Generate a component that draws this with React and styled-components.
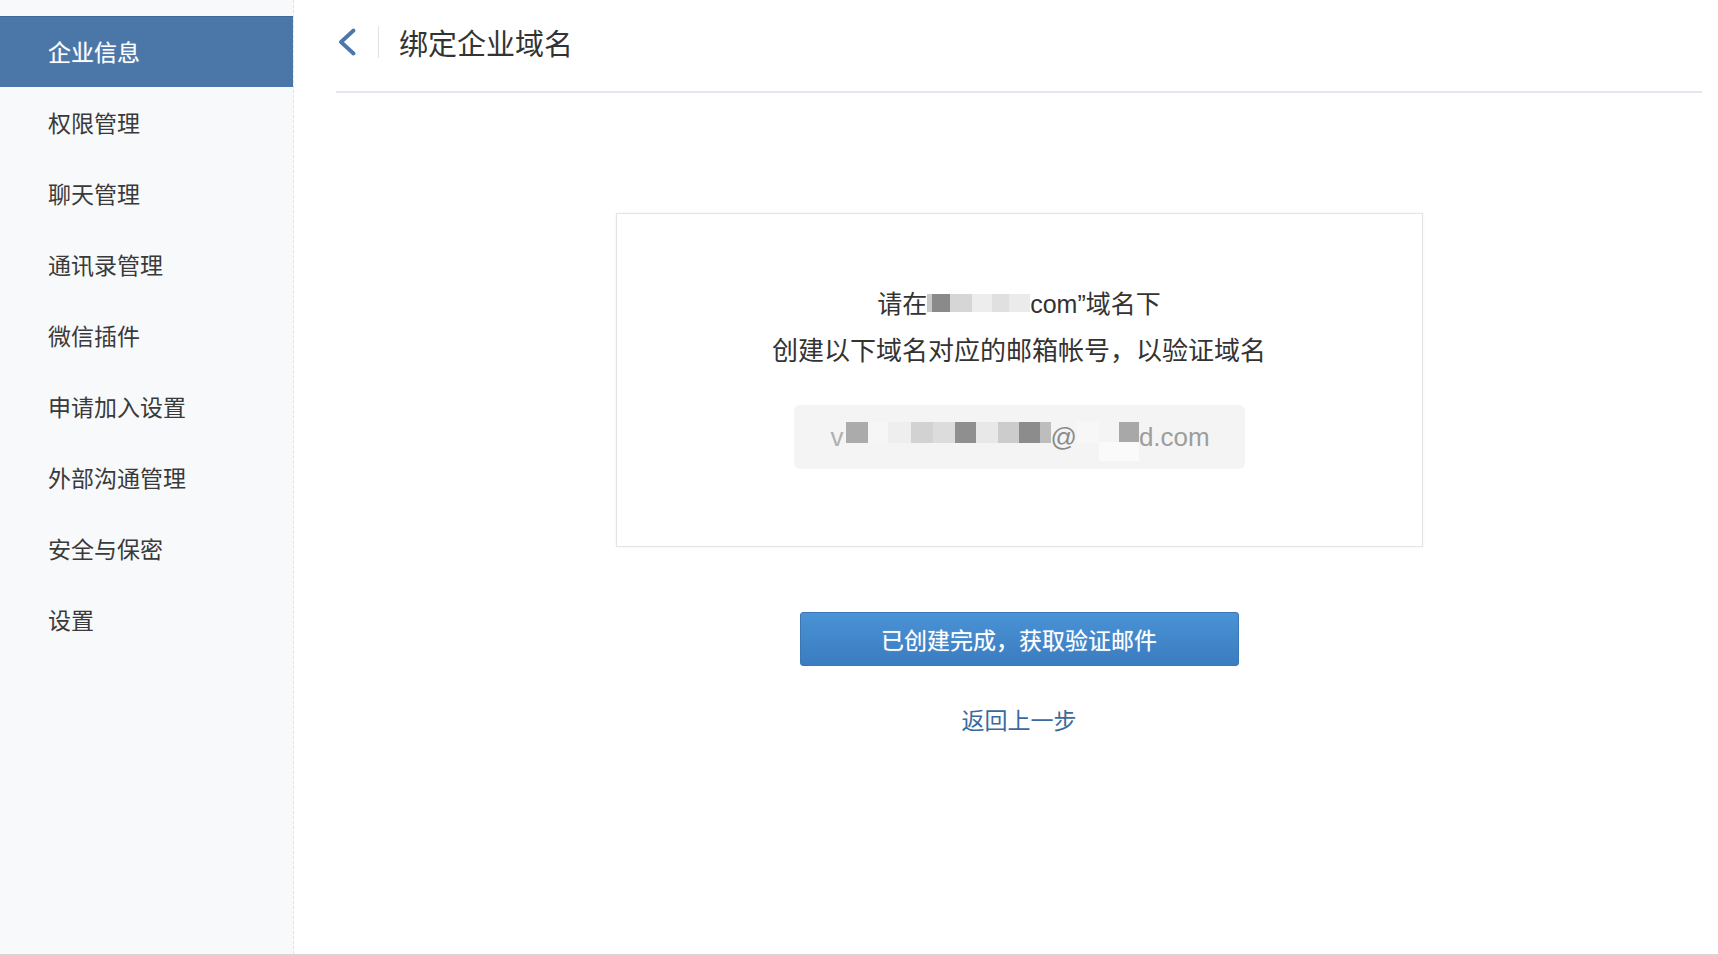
import React from "react";
import styled, { createGlobalStyle } from "styled-components";

const Global = createGlobalStyle`
  html, body { margin: 0; padding: 0; background: #fff; }
  body { font-family: "Liberation Sans", "Noto Sans CJK SC", sans-serif; color: #333; }
  * { box-sizing: border-box; }
`;

const Page = styled.div`
  display: flex;
  width: 1718px;
  height: 956px;
  border-bottom: 2px solid #d6d6d6;
  overflow: hidden;
`;

const Sidebar = styled.nav`
  width: 294px;
  flex-shrink: 0;
  background: #f7f9fb;
  border-right: 1px dashed #dfe4ea;
  padding-top: 16px;
  display: flex;
  flex-direction: column;
`;

const NavItem = styled.div`
  height: 71px;
  display: flex;
  align-items: center;
  padding-left: 48px;
  padding-bottom: 2px;
  font-size: 23px;
  font-family: "Noto Sans CJK SC", sans-serif;
  color: ${(p) => (p.$active ? "#fff" : "#3a3a3a")};
  background: ${(p) => (p.$active ? "#4a77a8" : "transparent")};
  border-top: 1px solid ${(p) => (p.$active ? "#3e6b9d" : "transparent")};
  text-shadow: ${(p) => (p.$active ? "0 0 1px rgba(255,255,255,0.5)" : "none")};
`;

const Main = styled.main`
  flex: 1;
  display: flex;
  flex-direction: column;
  padding: 0 16px 0 42px;
`;

const Header = styled.header`
  height: 93px;
  display: flex;
  align-items: center;
  border-bottom: 2px solid #e3e8ee;
  padding-left: 1px;
  padding-bottom: 7px;
`;

const BackButton = styled.button`
  border: none;
  background: none;
  padding: 0;
  display: flex;
  align-items: center;
  cursor: pointer;
`;

const Divider = styled.span`
  width: 1px;
  height: 32px;
  background: #e2e2e2;
  margin: 0 20px 0 21px;
`;

const Title = styled.h1`
  margin: 0;
  font-size: 29px;
  font-weight: normal;
  color: #333;
  font-family: "Noto Sans CJK SC", sans-serif;
`;

const Body = styled.section`
  display: flex;
  flex-direction: column;
  align-items: center;
  padding-top: 120px;
`;

const Card = styled.div`
  width: 807px;
  border: 1px solid #e4e4e4;
  box-shadow: 0 0 3px rgba(0, 0, 0, 0.05);
  display: flex;
  flex-direction: column;
  align-items: center;
  padding: 65px 0 77px;
`;

const Line = styled.div`
  display: flex;
  align-items: center;
  height: 46px;
  font-size: ${(p) => p.$size}px;
  color: #333;
`;

const Block = styled.span`
  display: inline-block;
  flex-shrink: 0;
  width: ${(p) => p.$w}px;
  height: ${(p) => p.$h || 21}px;
  background: ${(p) => p.$c};
  transform: translateY(${(p) => p.$dy || 0}px);
`;

const EmailBox = styled.div`
  margin-top: 34px;
  width: 451px;
  height: 64px;
  background: #f4f4f4;
  border-radius: 6px;
  display: flex;
  align-items: center;
  padding-left: 37px;
  font-size: 26px;
  color: #9d9d9d;
`;

const Faint = styled.span`
  color: ${(p) => p.$c || "#9d9d9d"};
  flex-shrink: 0;
`;

const Stack = styled.span`
  display: inline-flex;
  flex-direction: column;
  align-items: flex-end;
  flex-shrink: 0;
  transform: translateY(4px);
`;

const PrimaryButton = styled.button`
  margin-top: 65px;
  width: 439px;
  height: 54px;
  border: 1px solid #3876b6;
  border-radius: 3px;
  background: linear-gradient(#4a93d6, #3a7cbf);
  color: #fff;
  font-size: 23px;
  font-family: "Noto Sans CJK SC", sans-serif;
  text-shadow: 0 0 1px rgba(255, 255, 255, 0.5);
  cursor: pointer;
`;

const BackLink = styled.a`
  margin-top: 38px;
  font-size: 23px;
  line-height: 30px;
  color: #3b6a9c;
  font-family: "Noto Sans CJK SC", sans-serif;
  text-decoration: none;
  cursor: pointer;
`;

const navItems = [
  "企业信息",
  "权限管理",
  "聊天管理",
  "通讯录管理",
  "微信插件",
  "申请加入设置",
  "外部沟通管理",
  "安全与保密",
  "设置",
];

const line1Blocks = [
  ["#c8c8c8", 5],
  ["#8a8a8a", 18],
  ["#d6d6d6", 22],
  ["#ededed", 20],
  ["#e0e0e0", 17],
  ["#ebebeb", 21],
];

const emailBlocks = [
  ["transparent", 2],
  ["#ababab", 22],
  ["#f6f6f6", 20],
  ["#eeeeee", 23],
  ["#d2d2d2", 22],
  ["#dcdcdc", 22],
  ["#8f8f8f", 21],
  ["#e8e8e8", 22],
  ["#cccccc", 21],
  ["#8c8c8c", 21],
  ["#bdbdbd", 11],
];

export default function App() {
  return (
    <>
      <Global />
      <Page>
        <Sidebar>
          {navItems.map((t, i) => (
            <NavItem key={t} $active={i === 0}>
              {t}
            </NavItem>
          ))}
        </Sidebar>
        <Main>
          <Header>
            <BackButton aria-label="返回">
              <svg width="20" height="28" viewBox="0 0 20 28">
                <polyline
                  points="16.5,2.5 4,14 16.5,25.5"
                  fill="none"
                  stroke="#4a78ab"
                  strokeWidth="3.8"
                  strokeLinecap="round"
                  strokeLinejoin="round"
                />
              </svg>
            </BackButton>
            <Divider />
            <Title>绑定企业域名</Title>
          </Header>
          <Body>
            <Card>
              <Line $size={25}>
                <span>请在</span>
                {line1Blocks.map(([c, w], i) => (
                  <Block key={i} $c={c} $w={w} $h={18} $dy={1} />
                ))}
                <span>com”域名下</span>
              </Line>
              <Line $size={26}>创建以下域名对应的邮箱帐号，以验证域名</Line>
              <EmailBox>
                <Faint $c="#b0b0b0">v</Faint>
                {emailBlocks.map(([c, w], i) => (
                  <Block key={i} $c={c} $w={w} $dy={-5} />
                ))}
                <Faint $c="#8a8a8a">@</Faint>
                <Block $c="#f7f7f7" $w={22} $dy={-5} />
                <Stack>
                  <Block $c="#a8a8a8" $w={20} $h={20} />
                  <Block $c="#fafafa" $w={40} $h={19} />
                </Stack>
                <Faint>d.com</Faint>
              </EmailBox>
            </Card>
            <PrimaryButton>已创建完成，获取验证邮件</PrimaryButton>
            <BackLink>返回上一步</BackLink>
          </Body>
        </Main>
      </Page>
    </>
  );
}
